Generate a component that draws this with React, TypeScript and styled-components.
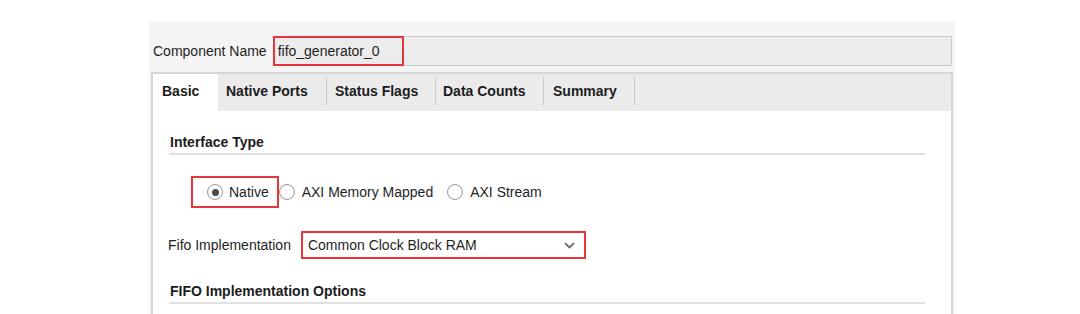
import React, { useState } from "react";
import styled, { createGlobalStyle } from "styled-components";

const GlobalStyle = createGlobalStyle`
  body {
    margin: 0;
    background: #ffffff;
    font-family: "Liberation Sans", Arial, sans-serif;
    font-size: 14px;
    color: #1f1f1f;
  }
`;

const Page = styled.div`
  padding: 22px 0 0 149px;
  height: 314px;
  box-sizing: border-box;
  overflow: hidden;
`;

const Frame = styled.div`
  width: 806px;
  height: 100%;
  box-sizing: border-box;
  background: #f4f4f4;
  padding: 14px 2px 0 2px;
`;

const NameRow = styled.div`
  display: flex;
  align-items: center;
  gap: 6px;
  height: 30px;
  padding-left: 2px;
`;

const NameLabel = styled.span`
  white-space: nowrap;
`;

const NameField = styled.div`
  flex: 1;
  display: flex;
  height: 30px;
  box-sizing: border-box;
  margin-right: 1px;
  background: #ececec;
  border: 1px solid #c9c9c9;
`;

const NameValue = styled.div`
  width: 131px;
  margin: -1px;
  box-sizing: border-box;
  padding-left: 3px;
  display: flex;
  align-items: center;
  border: 2px solid #e8353d;
`;

const TabPanel = styled.div`
  margin-top: 6px;
  height: 260px;
  border: 2px solid #d6d6d6;
  border-bottom: none;
  background: #ffffff;
`;

const TabBar = styled.div`
  display: flex;
  height: 37px;
  background: #ebebeb;
`;

const Tab = styled.div<{ $width: number; $active?: boolean }>`
  width: ${(p) => p.$width}px;
  display: flex;
  align-items: flex-start;
  background: ${(p) => (p.$active ? "#ffffff" : "transparent")};
  font-weight: bold;
  color: #1c1c1c;
`;

const TabLabel = styled.div<{ $pad: number; $sep?: boolean }>`
  flex: 1;
  height: 28px;
  margin-top: 3px;
  display: flex;
  align-items: center;
  padding-left: ${(p) => p.$pad}px;
  border-right: ${(p) => (p.$sep ? "1px solid #c9c9c9" : "none")};
  white-space: nowrap;
`;

const Body = styled.div`
  padding: 23px 26px 0 16px;
`;

const SectionTitle = styled.div<{ $gap?: number }>`
  margin-top: ${(p) => p.$gap ?? 0}px;
  line-height: 16px;
  padding: 0 0 3px 1px;
  font-weight: bold;
  color: #1c1c1c;
  border-bottom: 2px solid #e1e1e1;
`;

const RadioRow = styled.div`
  display: flex;
  align-items: center;
  height: 32px;
  margin-top: 21px;
  padding-left: 22px;
`;

const RadioOption = styled.label<{ $marked?: boolean; $gap: number }>`
  display: flex;
  align-items: center;
  gap: ${(p) => (p.$marked ? 6 : 7)}px;
  height: 32px;
  box-sizing: border-box;
  margin-left: ${(p) => p.$gap}px;
  padding: ${(p) => (p.$marked ? "0 8px 0 14px" : "0")};
  border: ${(p) => (p.$marked ? "2px solid #e8353d" : "none")};
  cursor: pointer;
`;

const Circle = styled.span<{ $on: boolean }>`
  width: 16px;
  height: 16px;
  box-sizing: border-box;
  border-radius: 50%;
  border: 1px solid #9a9a9a;
  background: radial-gradient(circle, #ffffff 55%, #ececec 100%);
  display: flex;
  align-items: center;
  justify-content: center;

  &::after {
    content: "";
    width: 7px;
    height: 7px;
    border-radius: 50%;
    background: #4a4a4a;
    display: ${(p) => (p.$on ? "block" : "none")};
  }
`;

const FieldRow = styled.div`
  display: flex;
  align-items: center;
  gap: 10px;
  margin-top: 23px;
  margin-left: -1px;
`;

const Select = styled.div`
  width: 285px;
  height: 28px;
  box-sizing: border-box;
  border: 2px solid #e8353d;
  padding: 0 9px 0 5px;
  display: flex;
  align-items: center;
  justify-content: space-between;
`;

const Chevron = () => (
  <svg width="11" height="7" viewBox="0 0 11 7">
    <path d="M1 1.2 L5.5 5.5 L10 1.2" fill="none" stroke="#6a6a6a" strokeWidth="1.8" />
  </svg>
);

const tabs = [
  { name: "Basic", width: 65, pad: 9 },
  { name: "Native Ports", width: 109, pad: 8 },
  { name: "Status Flags", width: 109, pad: 8 },
  { name: "Data Counts", width: 108, pad: 7 },
  { name: "Summary", width: 91, pad: 9 },
];

const interfaces = [
  { name: "Native", gap: 0, marked: true },
  { name: "AXI Memory Mapped", gap: 0 },
  { name: "AXI Stream", gap: 14 },
];

export default function App() {
  const [iface, setIface] = useState("Native");

  return (
    <Page>
      <GlobalStyle />
      <Frame>
        <NameRow>
          <NameLabel>Component Name</NameLabel>
          <NameField>
            <NameValue>fifo_generator_0</NameValue>
          </NameField>
        </NameRow>

        <TabPanel>
          <TabBar>
            {tabs.map((t, i) => (
              <Tab key={t.name} $width={t.width} $active={i === 0}>
                <TabLabel $pad={t.pad} $sep={i > 0}>
                  {t.name}
                </TabLabel>
              </Tab>
            ))}
          </TabBar>

          <Body>
            <SectionTitle>Interface Type</SectionTitle>
            <RadioRow>
              {interfaces.map((o) => (
                <RadioOption
                  key={o.name}
                  $gap={o.gap}
                  $marked={o.marked}
                  onClick={() => setIface(o.name)}
                >
                  <Circle $on={iface === o.name} />
                  <span>{o.name}</span>
                </RadioOption>
              ))}
            </RadioRow>

            <FieldRow>
              <span>Fifo Implementation</span>
              <Select>
                <span>Common Clock Block RAM</span>
                <Chevron />
              </Select>
            </FieldRow>

            <SectionTitle $gap={24}>FIFO Implementation Options</SectionTitle>
          </Body>
        </TabPanel>
      </Frame>
    </Page>
  );
}
